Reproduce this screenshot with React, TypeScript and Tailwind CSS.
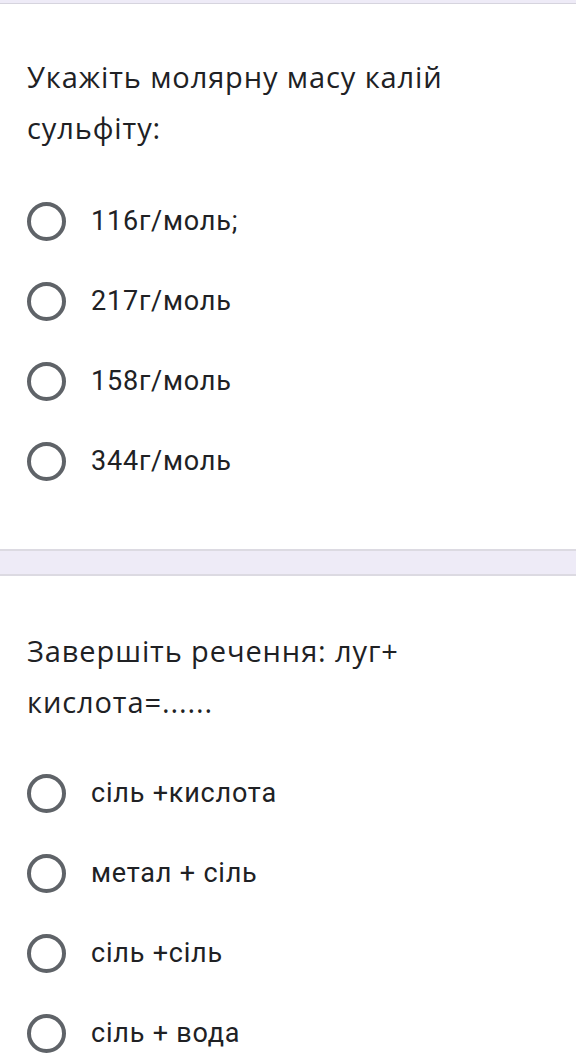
import React from "react";

const questions = [
  {
    title: "Укажіть молярну масу калій сульфіту:",
    options: ["116г/моль;", "217г/моль", "158г/моль", "344г/моль"],
    top: "pt-[47px]",
    gap: "mt-[28px]",
  },
  {
    title: "Завершіть речення: луг+ кислота=......",
    options: ["сіль +кислота", "метал + сіль", "сіль +сіль", "сіль + вода"],
    top: "pt-[49px]",
    gap: "mt-[26px]",
  },
];

const Radio = () => (
  <span className="block w-[39px] h-[39px] rounded-full border-[4px] border-[#5f6368] shrink-0" />
);

type CardProps = { title: string; options: string[]; top: string; gap: string };

const Card = ({ title, options, top, gap }: CardProps) => (
  <div className={`bg-white pb-[48px] px-[27px] ${top}`}>
    <h2 className="font-['Open_Sans',sans-serif] text-[29px] tracking-[0.9px] leading-[51px] text-[#202124] pr-[100px]">
      {title}
    </h2>
    <div className={`flex flex-col ${gap}`}>
      {options.map((o) => (
        <label key={o} className="flex items-center h-[80px] gap-[25px]">
          <Radio />
          <span className="text-[27px] tracking-[0.8px] text-[#202124]">{o}</span>
        </label>
      ))}
    </div>
  </div>
);

export default function App() {
  return (
    <div className="w-[576px] h-[1062px] overflow-hidden bg-white font-['Roboto',sans-serif]">
      <div className="h-[4px] bg-[#eeebf7] border-b border-[#d6d4de]" />
      <Card {...questions[0]} />
      <div className="h-[27px] bg-[#eeebf7] border-y-2 border-[#dcdae2]" />
      <Card {...questions[1]} />
    </div>
  );
}
